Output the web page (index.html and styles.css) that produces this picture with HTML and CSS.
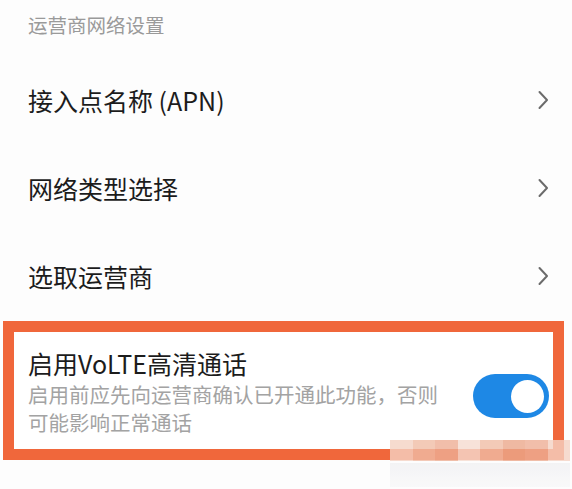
FILE: index.html
```html
<!DOCTYPE html>
<html lang="zh">
<head>
<meta charset="utf-8">
<link rel="stylesheet" href="styles.css">
</head>
<body>
<div class="page">
  <div class="section-title">运营商网络设置</div>
  <div class="row">
    <span class="row-label">接入点名称 (APN)</span>
    <svg class="chev" viewBox="0 0 12 20" width="12" height="20"><path d="M2.5 2 L10 10 L2.5 18" fill="none" stroke="#6b6b6b" stroke-width="2" stroke-linecap="round" stroke-linejoin="round"/></svg>
  </div>
  <div class="row">
    <span class="row-label">网络类型选择</span>
    <svg class="chev" viewBox="0 0 12 20" width="12" height="20"><path d="M2.5 2 L10 10 L2.5 18" fill="none" stroke="#6b6b6b" stroke-width="2" stroke-linecap="round" stroke-linejoin="round"/></svg>
  </div>
  <div class="row">
    <span class="row-label">选取运营商</span>
    <svg class="chev" viewBox="0 0 12 20" width="12" height="20"><path d="M2.5 2 L10 10 L2.5 18" fill="none" stroke="#6b6b6b" stroke-width="2" stroke-linecap="round" stroke-linejoin="round"/></svg>
  </div>
  <div class="highlight">
    <div class="volte">
      <div class="volte-text">
        <div class="volte-title">启用VoLTE高清通话</div>
        <div class="volte-desc">启用前应先向运营商确认已开通此功能，否则可能影响正常通话</div>
      </div>
      <div class="toggle"><div class="knob"></div></div>
    </div>
  </div>
  <div class="mosaic">
    <div class="mosaic-band">
      <span class="m1"></span><span class="m2"></span><span class="m3"></span><span class="m4"></span><span class="m2"></span><span class="m5"></span><span class="m3"></span><span class="m1"></span>
    </div>
    <div class="mosaic-low"></div>
  </div>
</div>
</body>
</html>
```

FILE: styles.css
```css
* { box-sizing: border-box; }
html, body { margin: 0; padding: 0; background: #fdfdfd; }
body {
  width: 572px;
  height: 489px;
  overflow: hidden;
  font-family: "Noto Sans CJK SC", "Noto Sans", sans-serif;
}
.page {
  position: relative;
  width: 572px;
  height: 489px;
}
.section-title {
  height: 56px;
  padding: 10px 0 0 28px;
  font-size: 19.5px;
  line-height: 30px;
  color: #9a9a9a;
}
.row {
  height: 88px;
  display: flex;
  align-items: center;
  justify-content: space-between;
  padding: 0 23px 0 28px;
}
.row-label {
  font-size: 25px;
  line-height: 32px;
  color: #1c1c1c;
}
.chev { display: block; }
.highlight {
  margin: 1px 8px 0 3px;
  height: 139px;
  border: 11px solid #f0673b;
  background: #fff;
}
.volte {
  display: flex;
  align-items: center;
  padding: 14px 4px 0 14px;
}
.volte-text {
  width: 420px;
}
.volte-title {
  font-size: 25px;
  line-height: 34px;
  color: #1c1c1c;
}
.volte-desc {
  font-size: 20.5px;
  line-height: 28px;
  color: #a3a3a3;
}
.toggle {
  width: 76px;
  height: 44px;
  margin-top: 10px;
  margin-left: auto;
  border-radius: 22px;
  background: #1e88e5;
  display: flex;
  align-items: center;
  justify-content: flex-end;
  padding-right: 5px;
}
.knob {
  width: 33px;
  height: 33px;
  border-radius: 50%;
  background: #fff;
}
.mosaic {
  position: absolute;
  left: 390px;
  top: 440px;
  width: 180px;
  height: 49px;
  display: flex;
  flex-direction: column;
  opacity: 0.8;
}
.mosaic-band {
  display: flex;
  height: 21px;
  background: #f6e3da;
}
.mosaic-band span { flex: 1; }
.mosaic-band .m1 { background: #f5d3c4; }
.mosaic-band .m2 { background: #f1bda6; }
.mosaic-band .m3 { background: #eeaf95; }
.mosaic-band .m4 { background: #f6dcd0; }
.mosaic-band .m5 { background: #eca88b; }
.mosaic-low {
  height: 24px;
  margin-top: 2px;
  background: linear-gradient(#ececef, #f7f7f8);
  opacity: 0.7;
}
```
